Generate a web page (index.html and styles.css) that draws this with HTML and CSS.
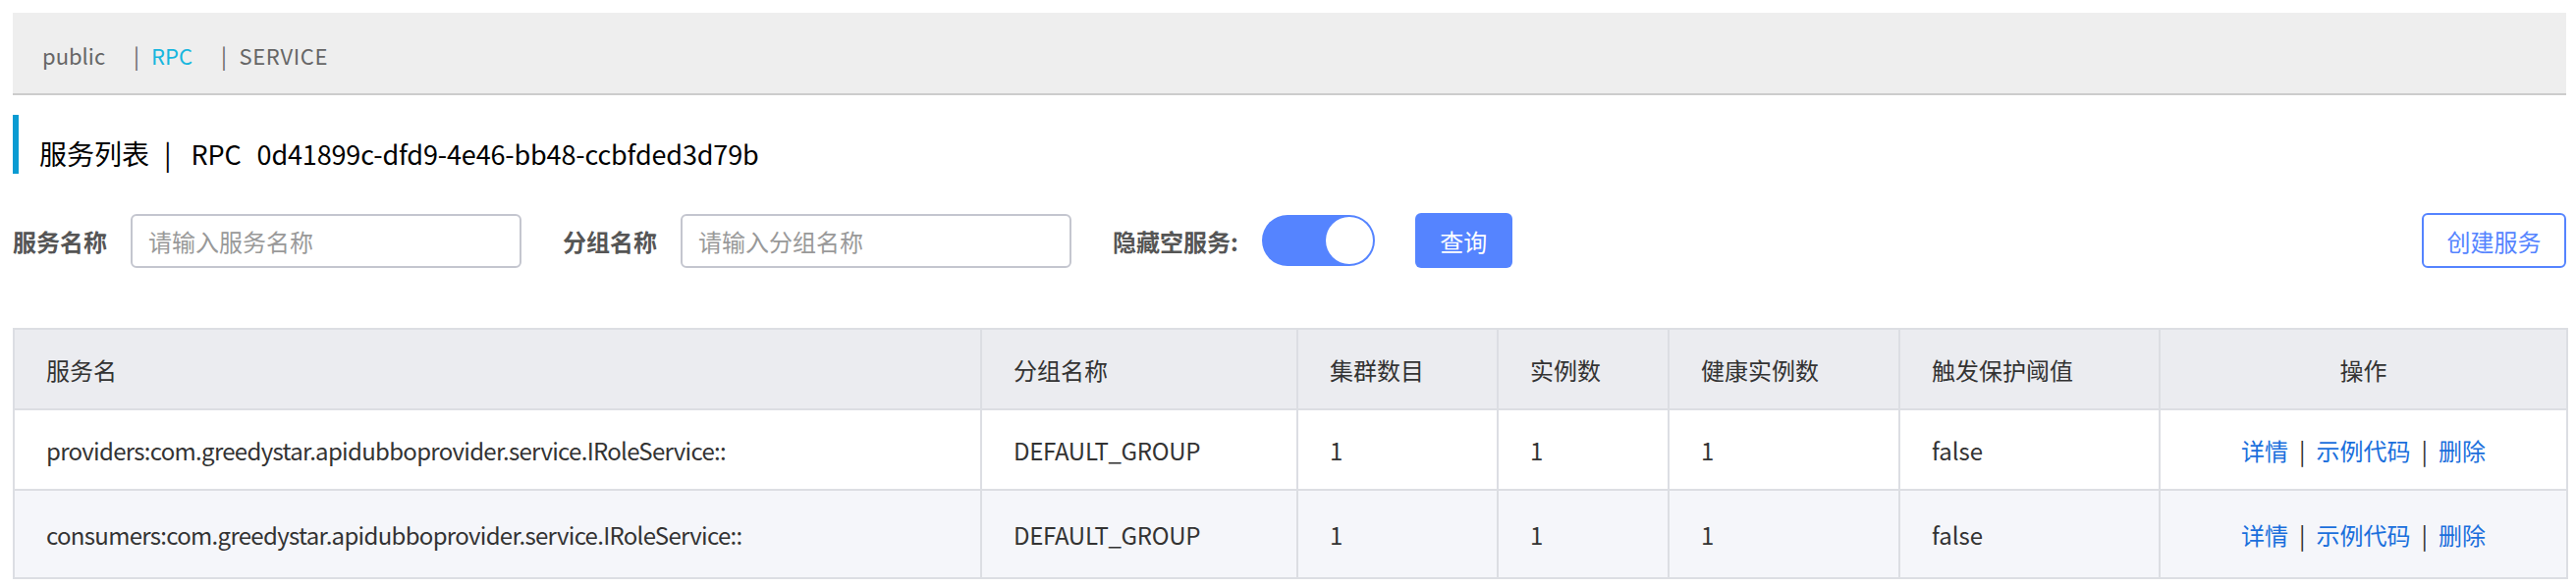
FILE: index.html
```html
<!DOCTYPE html>
<html lang="zh-CN">
<head>
<meta charset="utf-8">
<title>服务列表</title>
<link rel="stylesheet" href="styles.css">
</head>
<body>
<div class="page">
  <div class="ns-bar">
    <span class="ns-item">public</span>
    <span class="ns-item active"><span class="ns-sep">|</span>RPC</span>
    <span class="ns-item"><span class="ns-sep">|</span>SERVICE</span>
  </div>

  <div class="page-title">
    <span>服务列表</span><span class="t-sep">|</span><span class="t-latin">RPC</span><span class="t-latin t-id">0d41899c-dfd9-4e46-bb48-ccbfded3d79b</span>
  </div>

  <div class="filter-row">
    <label class="f-label">服务名称</label>
    <input class="f-input" type="text" placeholder="请输入服务名称">
    <label class="f-label">分组名称</label>
    <input class="f-input" type="text" placeholder="请输入分组名称">
    <label class="f-label">隐藏空服务:</label>
    <span class="switch"><span class="knob"></span></span>
    <button class="btn-primary">查询</button>
    <button class="btn-outline">创建服务</button>
  </div>

  <table class="svc-table">
    <colgroup>
      <col class="c1"><col class="c2"><col class="c3"><col class="c4"><col class="c5"><col class="c6"><col class="c7">
    </colgroup>
    <thead>
      <tr>
        <th>服务名</th><th>分组名称</th><th>集群数目</th><th>实例数</th><th>健康实例数</th><th>触发保护阈值</th><th class="center">操作</th>
      </tr>
    </thead>
    <tbody>
      <tr>
        <td class="name">providers:com.greedystar.apidubboprovider.service.IRoleService::</td>
        <td class="grp">DEFAULT_GROUP</td><td>1</td><td>1</td><td>1</td><td>false</td>
        <td class="center"><a class="lnk">详情</a><span class="pipe">|</span><a class="lnk">示例代码</a><span class="pipe">|</span><a class="lnk">删除</a></td>
      </tr>
      <tr class="alt">
        <td class="name">consumers:com.greedystar.apidubboprovider.service.IRoleService::</td>
        <td class="grp">DEFAULT_GROUP</td><td>1</td><td>1</td><td>1</td><td>false</td>
        <td class="center"><a class="lnk">详情</a><span class="pipe">|</span><a class="lnk">示例代码</a><span class="pipe">|</span><a class="lnk">删除</a></td>
      </tr>
    </tbody>
  </table>
</div>
</body>
</html>
```
FILE: styles.css
```css
* { box-sizing: border-box; }
html, body { margin: 0; padding: 0; background: #fff; overflow: hidden; }
body {
  font-family: "Noto Sans CJK SC", "Noto Sans", sans-serif;
  font-size: 24px;
  color: #333;
}
.page {
  padding: 13px 0 0 13px;
  width: 2613px;
}
.ns-bar {
  height: 84px;
  background: #eeeeee;
  border-bottom: 2px solid #cccccc;
  display: flex;
  align-items: center;
  padding-left: 30px;
  padding-top: 4px;
  font-size: 22px;
  color: #666;
}
.ns-item { margin-right: 29px; }
.ns-item.active { color: #16b6de; }
.ns-sep { color: #666; margin-right: 12px; }
.ns-item:last-child { letter-spacing: 0.6px; }

.page-title {
  margin-top: 20px;
  height: 60px;
  border-left: 6px solid #0a9bd2;
  padding-left: 21px;
  padding-top: 18px;
  display: flex;
  align-items: center;
  font-size: 28px;
  color: #000;
}
.t-sep { margin: 0 20px 0 15px; }
.t-latin { font-size: 27px; letter-spacing: -0.15px; }
.t-id { margin-left: 16px; }

.filter-row {
  margin-top: 40px;
  display: flex;
  align-items: center;
  height: 56px;
}
.f-label {
  font-weight: bold;
  color: #555;
  margin-right: 24px;
}
.f-input {
  width: 398px;
  height: 55px;
  border: 2px solid #c4c6cf;
  border-radius: 6px;
  padding: 0 16px;
  font-family: inherit;
  font-size: 24px;
  margin-right: 42px;
  outline: none;
}
.f-input::placeholder { color: #999; }
.switch {
  width: 115px;
  height: 52px;
  border-radius: 26px;
  background: #5584ff;
  display: flex;
  align-items: center;
  justify-content: flex-end;
  padding-right: 2px;
  margin-right: 41px;
}
.knob {
  width: 48px;
  height: 48px;
  border-radius: 50%;
  background: #fff;
}
.btn-primary {
  width: 99px;
  height: 56px;
  border: none;
  border-radius: 6px;
  background: #5584ff;
  color: #fff;
  font-family: inherit;
  font-size: 24px;
  padding: 0;
}
.btn-outline {
  margin-left: auto;
  width: 147px;
  height: 56px;
  border: 2px solid #5584ff;
  border-radius: 6px;
  background: #fff;
  color: #5584ff;
  font-family: inherit;
  font-size: 24px;
  padding: 0;
}

.svc-table {
  margin-top: 61px;
  width: 2600px;
  table-layout: fixed;
  border-collapse: collapse;
  border: 2px solid #dcdee3;
}
.c1 { width: 985px; }
.c2 { width: 322px; }
.c3 { width: 204px; }
.c4 { width: 174px; }
.c5 { width: 235px; }
.c6 { width: 265px; }
.c7 { width: 415px; }
.svc-table th, .svc-table td {
  border: 2px solid #dcdee3;
  padding: 0 0 0 32px;
  text-align: left;
  font-weight: normal;
  color: #333;
  white-space: nowrap;
}
.svc-table th {
  height: 82px;
  background: #ebecf0;
}
.svc-table td { height: 82px; background: #fff; }
.svc-table tr.alt td { background: #f5f6fa; height: 90px; }
.svc-table td.name { letter-spacing: -0.7px; }
.svc-table td.grp { letter-spacing: -0.3px; }
.svc-table .center { text-align: center; padding-left: 0; }
.lnk { color: #1a6fdc; text-decoration: none; }
.pipe { color: #333; margin: 0 11px; }
```
